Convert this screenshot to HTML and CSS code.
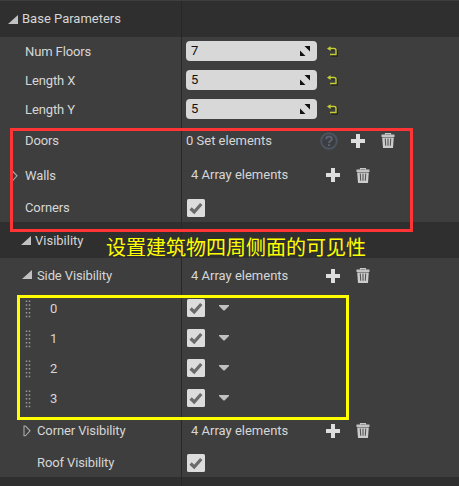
FILE: index.html
```
<!DOCTYPE html>
<html lang="en">
<head>
<meta charset="utf-8">
<title>Details</title>
<link rel="stylesheet" href="styles.css">
</head>
<body>
<svg class="defs" aria-hidden="true">
  <symbol id="open" viewBox="0 0 10 9"><path d="M0 9L10 0V9Z" fill="#c2c2c2"/></symbol>
  <symbol id="closed" viewBox="0 0 8 12"><path d="M1 1H2.5L7 5.8L2.5 10.8H1Z" fill="none" stroke="#aaa" stroke-width="1.1"/></symbol>
  <symbol id="spin" viewBox="0 0 12 12"><path d="M5.5 1H11V6.5ZM1 5.5L6.5 11H1Z" fill="#111"/></symbol>
  <symbol id="reset" viewBox="0 0 11 11"><path d="M3 3H7Q9.5 3 9.5 5V9.2H3.5" fill="none" stroke="#222" stroke-width="1.6" transform="translate(.6 .7)"/><path d="M2 2.5H7Q9 2.5 9 4.5V8.5H3" fill="none" stroke="#c5cf32" stroke-width="1.4"/><path d="M0 2.4L3.6 .2V5Z" fill="#c5cf32"/></symbol>
  <symbol id="plus" viewBox="0 0 14 14"><path d="M5 0H9V5H14V9H9V14H5V9H0V5H5Z" fill="#dedede"/></symbol>
  <symbol id="trash" viewBox="0 0 14 15"><path d="M4.5 1.8V.6H9.5V1.8" fill="none" stroke="#c8c8c8" stroke-width="1.2"/><path d="M.5 1.5H13.5V4H.5Z" fill="#c4c4c4"/><path d="M1.2 4.6H12.8L12 15H2Z" fill="#ccc"/><path d="M4.3 5.5L4.7 12.8M7 5.5V12.8M9.7 5.5L9.3 12.8" stroke="#555" stroke-width="1.1"/></symbol>
  <symbol id="help" viewBox="0 0 18 18"><circle cx="9" cy="9" r="7.8" fill="#3b3d40" stroke="#4c545f" stroke-width="2"/><path d="M6.2 7.2C6.2 3.6 11.8 3.8 11.8 7C11.8 9 9 9 9 11M9 12.2V14" fill="none" stroke="#596372" stroke-width="2"/></symbol>
  <symbol id="check" viewBox="0 0 18 18"><rect width="18" height="18" rx="1.5" fill="#dcdcdc"/><path d="M3.6 9.5L7.2 13L14.3 5" fill="none" stroke="#6a6a6a" stroke-width="3.2"/></symbol>
  <symbol id="down" viewBox="0 0 10 6"><path d="M0 0H10V1L5.5 5.5H4.5L0 1Z" fill="#c0c0c0"/></symbol>
  <symbol id="grip" viewBox="0 0 6 18"><path d="M1.5 .5V18M4.5 .5V18" stroke="#999" stroke-width="1.5" stroke-dasharray="1.5 2.3"/></symbol>
</svg>
<main class="panel">
  <div class="row header"><div class="name"><svg class="arrow"><use href="#open"/></svg><span>Base Parameters</span></div><div class="value"></div></div>
  <div class="row number-row"><div class="name">Num Floors</div><div class="value"><div class="field">7<svg class="spin"><use href="#spin"/></svg></div><svg class="reset"><use href="#reset"/></svg></div></div>
  <div class="row number-row middle"><div class="name">Length X</div><div class="value"><div class="field">5<svg class="spin"><use href="#spin"/></svg></div><svg class="reset"><use href="#reset"/></svg></div></div>
  <div class="row number-row"><div class="name">Length Y</div><div class="value"><div class="field">5<svg class="spin"><use href="#spin"/></svg></div><svg class="reset"><use href="#reset"/></svg></div></div>
  <div class="row doors"><div class="name">Doors</div><div class="value"><span class="count set">0 Set elements</span><svg class="help"><use href="#help"/></svg><svg class="plus"><use href="#plus"/></svg><svg class="trash"><use href="#trash"/></svg></div></div>
  <div class="row walls"><div class="name collapsed"><svg class="closed"><use href="#closed"/></svg>Walls</div><div class="value"><span class="count">4 Array elements</span><svg class="plus"><use href="#plus"/></svg><svg class="trash"><use href="#trash"/></svg></div></div>
  <div class="row corners"><div class="name">Corners</div><div class="value"><svg class="check"><use href="#check"/></svg></div></div>
  <div class="row header sub"><div class="name"><svg class="arrow"><use href="#open"/></svg><span>Visibility</span></div><div class="value"></div></div>
  <div class="row array"><div class="name nested"><svg class="arrow"><use href="#open"/></svg>Side Visibility</div><div class="value"><span class="count">4 Array elements</span><svg class="plus"><use href="#plus"/></svg><svg class="trash"><use href="#trash"/></svg></div></div>
  <div class="row item"><div class="name"><svg class="grip"><use href="#grip"/></svg>0</div><div class="value"><svg class="check"><use href="#check"/></svg><svg class="down"><use href="#down"/></svg></div></div>
  <div class="row item"><div class="name"><svg class="grip"><use href="#grip"/></svg>1</div><div class="value"><svg class="check"><use href="#check"/></svg><svg class="down"><use href="#down"/></svg></div></div>
  <div class="row item"><div class="name"><svg class="grip"><use href="#grip"/></svg>2</div><div class="value"><svg class="check"><use href="#check"/></svg><svg class="down"><use href="#down"/></svg></div></div>
  <div class="row item"><div class="name"><svg class="grip"><use href="#grip"/></svg>3</div><div class="value"><svg class="check"><use href="#check"/></svg><svg class="down"><use href="#down"/></svg></div></div>
  <div class="row array"><div class="name nested"><svg class="closed"><use href="#closed"/></svg>Corner Visibility</div><div class="value"><span class="count">4 Array elements</span><svg class="plus"><use href="#plus"/></svg><svg class="trash"><use href="#trash"/></svg></div></div>
  <div class="row roof"><div class="name nested">Roof Visibility</div><div class="value"><svg class="check"><use href="#check"/></svg></div></div>
  <div class="row header footer"><div class="name"></div><div class="value"></div></div>
  <div class="mark red"></div>
  <div class="mark yellow"></div>
  <div class="note" lang="zh-CN">设置建筑物四周侧面的可见性</div>
</main>
</body>
</html>
```
FILE: styles.css
```
* { box-sizing: border-box; }
body { margin: 0; background: #3e3e3e; }
.defs { position: absolute; width: 0; height: 0; }
svg { display: block; flex: none; }
.panel {
  position: relative;
  width: 459px;
  height: 486px;
  padding-top: 1px;
  overflow: hidden;
  background: #3e3e3e;
  color: #d6d6d6;
  font: 13px/18px Roboto, sans-serif;
}
.row { display: grid; grid-template-columns: 182px 1fr; height: 30px; }
.name, .value { display: flex; align-items: center; white-space: nowrap; }
.name { padding-top: 1px; padding-left: 25px; border-right: 1px solid #272727; letter-spacing: -0.12px; }
.value { padding-left: 4px; }
.header { height: 36px; background: #2f2f2f; }
.header .name { padding-top: 0; padding-left: 8px; gap: 4px; letter-spacing: 0; }
.header.sub .name { padding-left: 21px; padding-top: 1px; }
.arrow { width: 10px; height: 9px; }
.number-row { height: 28px; }
.number-row.middle { height: 30px; }
.field {
  display: flex;
  align-items: center;
  justify-content: space-between;
  width: 131px;
  height: 20px;
  padding: 0 6px 0 5px;
  border-radius: 4px;
  background: #d8d8d8;
  color: #111;
}
.spin { width: 12px; height: 12px; }
.reset { width: 11px; height: 11px; margin-left: 10px; }
.doors, .array { height: 35px; }
.doors .name, .array .name, .roof .name { padding-top: 0; }
.walls { height: 34px; }
.name.collapsed { padding-left: 10px; }
.closed { width: 8px; height: 12px; }
.collapsed .closed { margin-right: 7px; }
.count { width: 135px; margin-left: 5px; }
.count.set { width: 134px; margin-left: 0; }
.help { width: 18px; height: 18px; }
.help + .plus { margin-left: 13px; }
.plus { width: 14px; height: 14px; }
.trash { width: 14px; height: 15px; margin-left: 16px; }
.corners .value { padding-top: 2px; }
.corners .name { padding-top: 2px; }
.check { width: 18px; height: 18px; margin-left: 1px; }
.name.nested { padding-left: 37px; }
.nested .arrow { margin: 0 5px 3px -15px; }
.nested .closed { margin: 0 6px 0 -14px; }
.item .name { padding-left: 25px; }
.grip { width: 6px; height: 18px; margin-right: 19px; }
.down { width: 10px; height: 6px; margin-left: 14px; }
.roof { height: 29px; }
.footer { height: 9px; }
.mark { position: absolute; border: 3px solid; }
.red { left: 10px; top: 128px; width: 403px; height: 104px; border-color: #ff3434; }
.yellow { left: 17px; top: 295px; width: 332px; height: 125px; border-color: #ff0; }
.note {
  position: absolute;
  left: 106px;
  top: 235px;
  color: #ff0;
  font: 20px/24px "Noto Sans CJK SC", sans-serif;
  white-space: nowrap;
}
```
